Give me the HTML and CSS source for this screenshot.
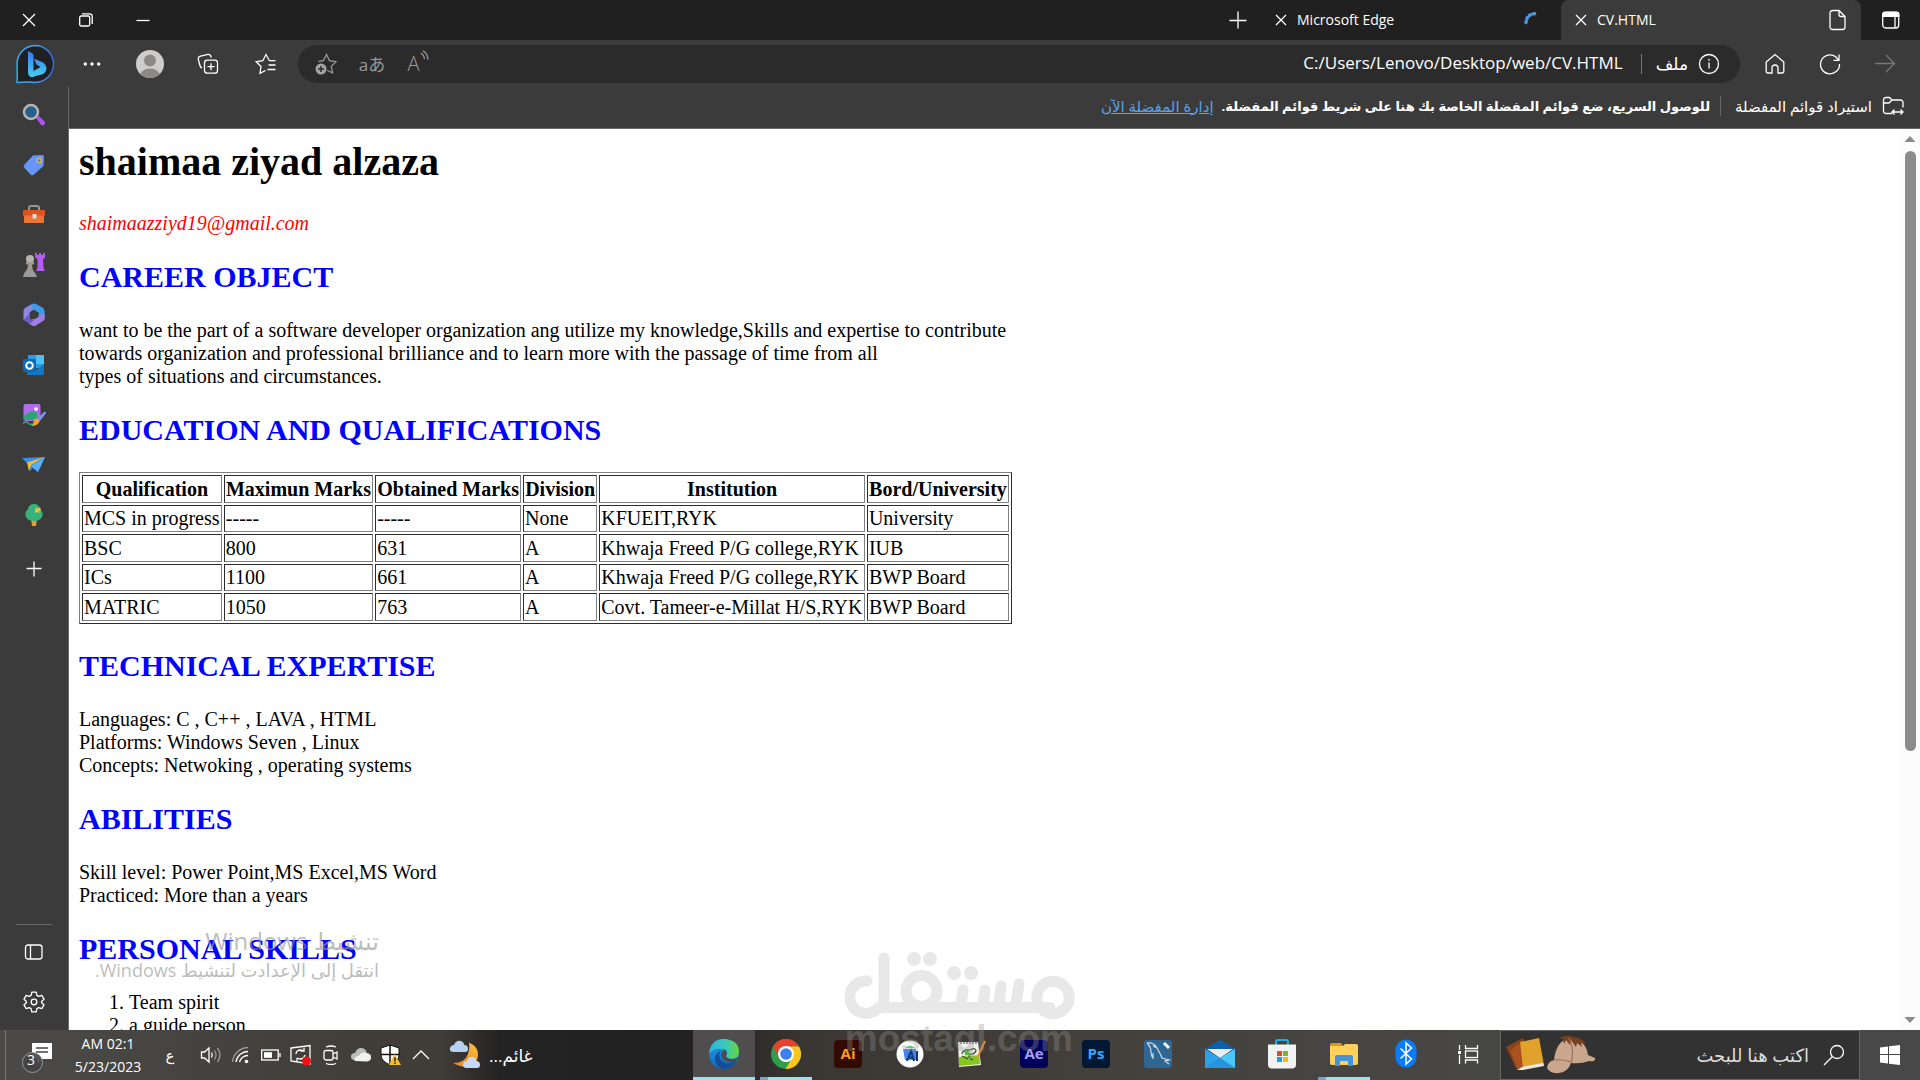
FILE: index.html
```html
<!DOCTYPE html>
<html lang="ar">
<head>
<meta charset="utf-8">
<title>CV.HTML</title>
<link rel="stylesheet" href="styles.css">
</head>
<body>
<header class="titlebar">
  <div class="window-controls">
    <button class="win-btn" aria-label="Close"><svg width="14" height="14" viewBox="0 0 14 14"><path d="M1 1l12 12M13 1L1 13" class="line"/></svg></button>
    <button class="win-btn" aria-label="Restore"><svg width="14" height="14" viewBox="0 0 14 14"><rect x=".7" y="3" width="10" height="10" rx="1.5" class="line"/><path d="M3 .8h7.5a2.6 2.6 0 0 1 2.7 2.7V11" class="line"/></svg></button>
    <button class="win-btn" aria-label="Minimize"><svg width="14" height="14" viewBox="0 0 14 14"><path d="M.5 7.5h13" class="line"/></svg></button>
  </div>
  <button class="new-tab" aria-label="New tab"><svg width="18" height="18" viewBox="0 0 18 18"><path d="M9 .5v17M.5 9.500h17" class="line"/></svg></button>
  <div class="tab">
    <button class="tab-close" aria-label="Close tab"><svg width="12" height="12" viewBox="0 0 12 12"><path d="M1 1l10 10M11 1L1 11" class="line"/></svg></button>
    <span class="tab-title">Microsoft Edge</span>
    <svg class="tab-icon" width="18" height="18" viewBox="0 0 18 18"><path d="M3 11.500C3.300 6 7 2.500 13.500 2.600" fill="none" stroke="#4a97dc" stroke-width="3.500" stroke-linecap="round" stroke-dasharray="1 3.200"/><path d="M3 11C3.500 6 7 2.600 13 2.700" fill="none" stroke="#4a97dc" stroke-width="2"/></svg>
  </div>
  <div class="tab active">
    <button class="tab-close" aria-label="Close tab"><svg width="12" height="12" viewBox="0 0 12 12"><path d="M1 1l10 10M11 1L1 11" class="line"/></svg></button>
    <span class="tab-title">CV.HTML</span>
    <svg class="tab-icon" width="18" height="22" viewBox="0 0 18 22"><path d="M3.500 1.500h6.500l6 6v10.500a2.500 2.500 0 0 1-2.500 2.500h-10A2.500 2.500 0 0 1 1 18V4a2.500 2.500 0 0 1 2.500-2.500zM10 1.500v4a2 2 0 0 0 2 2h4" class="line"/></svg>
  </div>
  <button class="tab-menu" aria-label="Tab actions"><svg width="20" height="20" viewBox="0 0 20 20"><rect x="1.700" y="2.500" width="16" height="15.500" rx="3" class="line"/><path d="M1 7V4.500A3 3 0 0 1 4 1.500h11.500a3 3 0 0 1 3 3V7z" fill="#fff"/><path d="M14 7v10.500" class="line"/></svg></button>
</header>

<nav class="toolbar" aria-label="Navigation">
  <button class="bing" aria-label="Bing">
    <svg width="40" height="40" viewBox="0 0 40 40"><defs><linearGradient id="ring" x1="0" x2="1"><stop offset="0" stop-color="#2bb0ea"/><stop offset=".5" stop-color="#4aa0f5"/><stop offset="1" stop-color="#2f6fe0"/></linearGradient><linearGradient id="bb" x1="0" y1="0" x2="0" y2="1"><stop offset="0" stop-color="#3a78f0"/><stop offset="1" stop-color="#45cdf0"/></linearGradient></defs><path d="M20 1.500A18.500 18.500 0 1 1 20 38.500Q14 37.500 2 38.500Q2.500 33 2 20A18.500 18.500 0 0 1 20 1.500z" fill="#1e2024" stroke="url(#ring)" stroke-width="1.500"/><path d="M13 7l4 2q1.500 1 1.500 2.500V27l7-4-4-2.500-2.500-6 9 4q4 2.500 3.200 7.500-.5 2.500-3 4L19 32.500q-2 1-4 0-2-1.500-2-4z" fill="url(#bb)"/></svg>
  </button>
  <div class="tools">
    <button class="tool" aria-label="Settings and more"><svg width="20" height="20" viewBox="0 0 20 20" fill="#fff"><circle cx="3.300" cy="10" r="1.700"/><circle cx="10" cy="10" r="1.700"/><circle cx="16.700" cy="10" r="1.700"/></svg></button>
    <button class="tool" aria-label="Profile"><svg width="28" height="28" viewBox="0 0 28 28"><clipPath id="av"><circle cx="14" cy="14" r="14"/></clipPath><g clip-path="url(#av)"><rect width="28" height="28" fill="#cfcdcc"/><circle cx="14" cy="10.500" r="6" fill="#8b8988"/><ellipse cx="14" cy="27" rx="10.500" ry="8.500" fill="#8b8988"/></g></svg></button>
    <button class="tool" aria-label="Collections"><svg width="22" height="22" viewBox="0 0 22 22"><rect x="7.500" y="7.200" width="13" height="13" rx="2.800" class="line"/><path d="M14 10.200v7M10.500 13.700h7" class="line"/><path d="M5 15Q3.300 14.500 2.500 11L1.300 6.200Q1 3.800 3.500 3.200L11 1.400Q13.500 1 14.300 4.500" class="line"/></svg></button>
    <button class="tool" aria-label="Favorites"><svg width="22" height="22" viewBox="0 0 22 22"><path d="M20.500 7.700h-6L11 1.500 7.800 7.700 1.200 8.800l4.800 4.700L5 20.300l5.500-2.800M13.500 12h7M12.500 16.500h8" class="line"/></svg></button>
  </div>
  <div class="address">
    <button class="mini" aria-label="Add to favorites"><svg width="22" height="22" viewBox="0 0 22 22"><path d="M3.500 8.500L8.300 7.700 11.500 1.500 14.500 7.700l6.500 1-4.700 4.700 1.200 6.500-5.200-2.400" class="line dim"/><circle cx="6" cy="16" r="5.500" fill="#a2a2a2"/><path d="M6 13v6M3 16h6" stroke="#2b2b2b" stroke-width="1.500"/></svg></button>
    <button class="mini translate" aria-label="Translate">aあ</button>
    <button class="mini read" aria-label="Read aloud">A<svg width="9" height="16" viewBox="0 0 9 16"><path d="M1 3q3 2 3.500 6M3 .7q4.500 2.500 5 9" class="line dim"/></svg></button>
    <input class="url" aria-label="Address" value="C:/Users/Lenovo/Desktop/web/CV.HTML">
    <button class="site-info"><span>ملف</span><svg width="22" height="22" viewBox="0 0 22 22"><circle cx="11" cy="11" r="9.500" class="line"/><path d="M11 9.500v6M11 6v1.800" class="line"/></svg></button>
  </div>
  <div class="nav-tools">
    <button class="tool" aria-label="Home"><svg width="20" height="22" viewBox="0 0 20 22"><path d="M1.200 9L10 1.500 18.800 9v9.500a1.500 1.500 0 0 1-1.500 1.500H13v-5a3 3 0 0 0-6 0v5H2.700a1.500 1.500 0 0 1-1.500-1.500z" class="line"/></svg></button>
    <button class="tool" aria-label="Refresh"><svg width="22" height="22" viewBox="0 0 22 22"><path d="M20.500 11A9.500 9.500 0 1 1 17 4l2.500 3M20 1.500v5.800h-5.500" class="line"/></svg></button>
    <button class="tool" aria-label="Forward"><svg width="22" height="22" viewBox="0 0 22 22"><path d="M1 10.500h19.500M12 2l8.500 8.500L12 19" fill="none" stroke="#777" stroke-width="1.300"/></svg></button>
  </div>
</nav>

<div class="workspace">
  <aside class="sidebar" aria-label="Sidebar">
    <button class="side" aria-label="Search"><svg width="24" height="24" viewBox="0 0 24 24"><path d="M14 15l3-2 6 6q0 4-3.500 3.500z" fill="#ab55f0"/><circle cx="9" cy="9" r="7" fill="#24618f" stroke="#b9b4ae" stroke-width="2.500"/></svg></button>
    <button class="side" aria-label="Shopping"><svg width="24" height="24" viewBox="0 0 24 24"><path d="M11 2.500L20 2q2 0 2 2l-.5 9L12 21.500q-2 1.500-3.500 0L2.500 15q-1.500-1.500 0-3.500z" fill="#6796fb"/><circle cx="17.300" cy="7.500" r="2" fill="#4472d0" stroke="#e5b53c" stroke-width="1.500"/></svg></button>
    <button class="side" aria-label="Tools"><svg width="24" height="24" viewBox="0 0 24 24"><path d="M7 8V5q0-2 2-2h6q2 0 2 2v3" fill="none" stroke="#98948e" stroke-width="2"/><rect x="1" y="7" width="22" height="6" rx="1" fill="#dd5220"/><rect x="2" y="12.500" width="20" height="7.500" rx="1" fill="#ec7436"/><rect x="10.500" y="11" width="4" height="4.500" fill="#ddd"/></svg></button>
    <button class="side" aria-label="Games"><svg width="24" height="24" viewBox="0 0 24 24"><path d="M13 0h2v2h2V0h2v2h2V0h2v5l-2 1 .5 9 1.500 3h-9l1.500-3V6l-2-1z" fill="#b45df2"/><circle cx="8" cy="6" r="4" fill="#b5b2b0"/><path d="M4 9h8v2l-2 1q0 5 3.500 8.500L15 24H1l1-3.500Q6 16 6 12l-2-1z" fill="#9d9996"/></svg></button>
    <button class="side" aria-label="Microsoft 365"><svg width="24" height="24" viewBox="0 0 24 24"><path d="M10 1L3.500 4.500Q1.500 6 1.500 8v8.500l6 3.500V9.500l5-3.500V1z" fill="#8e86e4"/><path d="M10 1q2-1 4 0l6.500 3.500q2 1.500 2 3.500v8L16.500 13V9.500L10.500 6z" fill="#3b9be8"/><path d="M22.500 10v7L14 22.500q-2 1-4 0L6 20l6-5 4.500-2z" fill="#a27de4"/><path d="M7.500 11v4.500L12 17.500 7.500 21l-6-4.500z" fill="#685fc6"/><path d="M12 7.500l4.500 2.500v4L12 16.500 8.500 14v-4z" fill="#3b3b3b"/></svg></button>
    <button class="side" aria-label="Outlook"><svg width="24" height="24" viewBox="0 0 24 24"><rect x="6" y="2" width="16" height="13" rx="1" fill="#2d9be0"/><path d="M14 2h8v9h-8z" fill="#4bc0f2"/><path d="M5 11l9 6 8-6v9q0 2-2 2H5z" fill="#1378c8"/><rect x="1" y="6" width="13" height="13" rx="1" fill="#0c6abc"/><circle cx="7.500" cy="12.500" r="3.300" fill="none" stroke="#fff" stroke-width="2"/></svg></button>
    <button class="side" aria-label="Image creator"><svg width="24" height="24" viewBox="0 0 24 24"><rect x="1.500" y="1" width="17" height="17" rx="2" fill="#b16bef"/><path d="M1.500 14Q9 5 15 10v7H2z" fill="#28a870"/><circle cx="14" cy="6" r="1.800" fill="#fff"/><path d="M1 20q4-2 5 0t5 1" fill="none" stroke="#35b37a" stroke-width="1.500"/><path d="M14 17l8-8q3-1 1.500 2L17 19z" fill="#7e92f0"/><path d="M14 15l3.500 3q-1 5-9 5 3-1 3-4 .5-3 2.500-4z" fill="#f4a42b"/></svg></button>
    <button class="side" aria-label="Drop"><svg width="24" height="24" viewBox="0 0 24 24"><path d="M0 5l23-1-7 15-5-4-4 3-1-7z" fill="#3590e8"/><path d="M22 4L5 9.500 7 18l2-6z" fill="#f5b833"/><path d="M23 4L9 13l7 6z" fill="#57aef5"/></svg></button>
    <button class="side" aria-label="E-tree"><svg width="24" height="24" viewBox="0 0 24 24"><path d="M9 15h6l-1 8h-4z" fill="#e8983c"/><path d="M12 1q5 0 6 5 4 4 2 8-2 4-8 4t-8-4q-2-4 2-8 1-5 6-5z" fill="#36b37b"/><path d="M14 4l2 2 2-2 1 3-2 1 1 2-3-1-2 1 0-3z" fill="#f2c037"/></svg></button>
    <button class="side add" aria-label="Add"><svg width="16" height="16" viewBox="0 0 16 16"><path d="M8 .5v15M.5 7.500h15" class="line"/></svg></button>
    <div class="side-bottom">
      <button class="side" aria-label="Hide sidebar"><svg width="20" height="18" viewBox="0 0 20 18"><rect x="1.500" y="2" width="16.500" height="14" rx="2.500" class="line"/><path d="M6.500 2v14" class="line"/></svg></button>
      <button class="side" aria-label="Settings"><svg width="24" height="24" viewBox="0 0 24 24"><path d="M9.800 2.200h4.400l.7 3.200 1.800 1 3.100-1L22 9.200l-2.400 2.200v1.300l2.400 2.100-2.200 3.800-3.100-1-1.800 1-.7 3.200H9.800l-.7-3.200-1.800-1-3.100 1L2 14.800l2.400-2.100v-1.300L2 9.200l2.200-3.800 3.100 1 1.800-1z" class="line" stroke-linejoin="round"/><circle cx="12" cy="12" r="2.800" class="line"/></svg></button>
    </div>
  </aside>

  <div class="browser">
    <div class="favbar" dir="rtl">
      <button class="import"><svg width="22" height="20" viewBox="0 0 22 20"><path d="M10 17.500H4A2.500 2.500 0 0 1 1.500 15V4A2.500 2.500 0 0 1 4 1.500h3.500L10 4h8.500A2.500 2.500 0 0 1 21 6.500v5M1.500 7H7l3-3M10 16h11M12.500 13.500L10 16l2.500 2.500M18.500 13.500L21 16l-2.500 2.500" class="line"/></svg><span>استيراد قوائم المفضلة</span></button>
      <p class="fav-note">للوصول السريع، ضع قوائم المفضلة الخاصة بك هنا على شريط قوائم المفضلة.</p>
      <a class="fav-link" href="#favorites">إدارة المفضلة الآن</a>
    </div>
    <div class="viewport">
      <main class="cv" lang="en">
        <h1>shaimaa ziyad alzaza</h1>
        <p class="email">shaimaazziyd19@gmail.com</p>
        <h2>CAREER OBJECT</h2>
        <p>want to be the part of a software developer organization ang utilize my knowledge,Skills and expertise to contribute<br>towards organization and professional brilliance and to learn more with the passage of time from all<br>types of situations and circumstances.</p>
        <h2>EDUCATION AND QUALIFICATIONS</h2>
        <table class="marks">
          <tr><th>Qualification</th><th>Maximun Marks</th><th>Obtained Marks</th><th>Division</th><th>Institution</th><th>Bord/University</th></tr>
          <tr><td>MCS in progress</td><td>-----</td><td>-----</td><td>None</td><td>KFUEIT,RYK</td><td>University</td></tr>
          <tr><td>BSC</td><td>800</td><td>631</td><td>A</td><td>Khwaja Freed P/G college,RYK</td><td>IUB</td></tr>
          <tr><td>ICs</td><td>1100</td><td>661</td><td>A</td><td>Khwaja Freed P/G college,RYK</td><td>BWP Board</td></tr>
          <tr><td>MATRIC</td><td>1050</td><td>763</td><td>A</td><td>Covt. Tameer-e-Millat H/S,RYK</td><td>BWP Board</td></tr>
        </table>
        <h2>TECHNICAL EXPERTISE</h2>
        <p>Languages: C , C++ , LAVA , HTML<br>Platforms: Windows Seven , Linux<br>Concepts: Netwoking , operating systems</p>
        <h2>ABILITIES</h2>
        <p>Skill level: Power Point,MS Excel,MS Word<br>Practiced: More than a years</p>
        <h2>PERSONAL SKILLS</h2>
        <ol>
          <li>Team spirit</li>
          <li>a guide person</li>
        </ol>
      </main>
      <div class="scrollbar">
        <svg width="12" height="6" viewBox="0 0 12 6"><path d="M6 0l5.500 6H.5z" fill="#8b8b8b"/></svg>
        <div class="track"><div class="thumb"></div></div>
        <svg width="12" height="6" viewBox="0 0 12 6"><path d="M6 6l5.500-6H.5z" fill="#8b8b8b"/></svg>
      </div>
    </div>
  </div>
</div>

<footer class="taskbar">
  <div class="tray">
    <button class="notify" aria-label="Notifications"><svg width="34" height="34" viewBox="0 0 34 34"><path d="M12 2h20v16H22l-5 5v-5h-5z" fill="#fff"/><path d="M16 7h12M16 11h12" stroke="#444" stroke-width="1.500"/><circle cx="12.500" cy="21.500" r="10" fill="#444" fill-opacity=".9" stroke="#999"/></svg><span class="count">3</span></button>
    <div class="clock"><span>AM 02:1</span><span>5/23/2023</span></div>
    <button class="lang">ع</button>
    <button class="tray-btn" aria-label="Volume"><svg width="22" height="20" viewBox="0 0 22 20"><path d="M1.500 7h3L9 3v14l-4.500-4h-3z" class="line"/><path d="M11.500 7.500q1.500 2.500 0 5" class="line"/><path d="M14.500 5.500q3 4.500 0 9M17.500 3q5 7 0 14" class="line dim"/></svg></button>
    <button class="tray-btn" aria-label="Network"><svg width="20" height="20" viewBox="0 0 20 20"><g class="line"><path d="M1.500 17A16 16 0 0 1 17 2.500" stroke="#999"/><path d="M5 17A12 12 0 0 1 17 6.500M8.500 17A8.500 8.500 0 0 1 17 10.500"/></g><circle cx="15.500" cy="16.500" r="1.800" fill="#fff"/></svg></button>
    <button class="tray-btn" aria-label="Battery"><svg width="20" height="12" viewBox="0 0 20 12"><rect x=".7" y="1" width="16.500" height="10" class="line"/><path d="M19 4v4" class="line"/><rect x="3" y="3.200" width="8" height="5.600" fill="#fff"/></svg></button>
    <button class="tray-btn" aria-label="Update"><svg width="22" height="22" viewBox="0 0 22 22"><path d="M1 4l19-2.500V20L1 17z" class="line"/><path d="M6 10q0-4 5-4l3 1M14 3.500V7h-3.500M15 11q-1 4-5 4l-3-1M7 17.500V14" class="line"/><circle cx="16.500" cy="17" r="4.500" fill="#f01212"/></svg></button>
    <button class="tray-btn" aria-label="Meet now"><svg width="18" height="20" viewBox="0 0 18 20"><rect x="2" y="5.500" width="9" height="9.500" rx="2" class="line"/><path d="M11 9l4-2v7l-4-2M4 2q5-2 10 0M4 18.500q5 2 10 0" class="line"/></svg></button>
    <button class="tray-btn" aria-label="OneDrive"><svg width="22" height="16" viewBox="0 0 22 16"><path d="M5 13.500q-4.500-1-4-4.500.5-3 4-3Q7 1 11 1q4.500 0 6 5 4 .5 4 4 0 3.500-4 4z" fill="#bdbcbb"/><path d="M5 14q-2-4 4-5.500 3-5 8-2 4 .5 4 4 0 3.500-4 4z" fill="#f1f1f1"/></svg></button>
    <button class="tray-btn" aria-label="Security"><svg width="22" height="22" viewBox="0 0 22 22"><path d="M10 1l9 3v7q0 6-9 10Q1 17 1 11V4z" fill="#fff" stroke="#111"/><path d="M10 1v19M1 10.500h18" stroke="#111" stroke-width="1.500"/><path d="M14.500 10L21 21H9z" fill="#f7bc2b"/><path d="M15 13.500v4M15 18.500v1.500" stroke="#222" stroke-width="1.500"/></svg></button>
    <button class="tray-btn" aria-label="Hidden icons"><svg width="18" height="10" viewBox="0 0 18 10"><path d="M1 9l8-8 8 8" class="line" stroke-width="2"/></svg></button>
  </div>
  <button class="weather"><svg width="32" height="30" viewBox="0 0 32 30"><defs><linearGradient id="moon" x1="0" y1="1" x2="1" y2="0"><stop offset="0" stop-color="#ef7b28"/><stop offset="1" stop-color="#fbc33c"/></linearGradient></defs><path d="M20 2.500Q32 8 28 20 21 32 4 23q12 0 15-9 2-6 1-11.500z" fill="url(#moon)"/><path d="M5 12q-5 0-4-4 1-3 4-3 2-5 7-4 3 1 3 4 4 0 4 4 0 3-3 3z" fill="#b5d0f0"/><path d="M17 28q-4-1-3-4 1-3 4-3 2-5 6-4t3 4q4 0 4 4 0 3-3 3z" fill="#c4d9f5"/></svg><span dir="rtl">غائم...</span></button>
  <div class="apps">
    <button class="app current" aria-label="Edge"><svg width="32" height="32" viewBox="0 0 32 32"><defs><linearGradient id="e1" x1="0" x2="1"><stop offset="0" stop-color="#2cb4e0"/><stop offset=".55" stop-color="#3cc8b8"/><stop offset="1" stop-color="#66d63c"/></linearGradient><linearGradient id="e2" x1="0" y1="0" x2="0" y2="1"><stop offset="0" stop-color="#1ea0dc"/><stop offset="1" stop-color="#1468c8"/></linearGradient></defs><circle cx="16" cy="16" r="15" fill="url(#e2)"/><path d="M1.500 13Q4 1 16 1q15 1 15 13 0 7-8 7-5 0-5-3 2-2 1-5-2-3-6-2Q7 10 1.500 15z" fill="url(#e1)"/><path d="M13 13q-4 5 1 10 7 5 15-1-4 8-12 9-9-1-10-9 0-7 6-9z" fill="#124f98"/><path d="M18 18q1 3 6 3 4 0 7-2-2 5-7 5-9 0-11-6 0-5 4-6 3 2 1 6z" fill="#4c4a4b"/></svg></button>
    <button class="app running" aria-label="Chrome"><svg width="32" height="32" viewBox="0 0 32 32"><circle cx="16" cy="16" r="15" fill="#2f9e4a"/><path d="M3 8.500A15 15 0 0 1 29 8.500H16L9.500 20z" fill="#e8412f"/><path d="M29 8.500A15 15 0 0 1 15.500 31l7-11.500L16 8.500z" fill="#fbc51e"/><circle cx="16" cy="16" r="8" fill="#fff"/><circle cx="16" cy="16" r="5.800" fill="#3a80f0"/></svg></button>
    <button class="app"><span class="adobe ai">Ai</span></button>
    <button class="app" aria-label="Android Studio"><svg width="28" height="28" viewBox="0 0 28 28"><circle cx="14" cy="14" r="13.500" fill="#fff"/><path d="M7 9h13v11H9z" fill="#4285f0"/><path d="M9 8q5-5 10 0z" fill="#3ddc84"/><path d="M11 21l4-10 3 10M12.500 17.500h5M21 11v10" fill="none" stroke="#153a66" stroke-width="2"/></svg></button>
    <button class="app" aria-label="Notepad++"><svg width="30" height="30" viewBox="0 0 30 30"><path d="M1 3h20l3 23-22 2z" fill="#f0f0ee"/><path d="M2 18l20-2 1 9-21 2z" fill="#87c61f"/><path d="M3 4h17" stroke="#999" stroke-width="2" stroke-dasharray="2 1"/><path d="M5 15q1-5 8-4 6-3 6 1-2 4-6 3-3 4 3 6M5 17l6 3" fill="none" stroke="#33491f" stroke-width="1.200"/><circle cx="10" cy="14" r="2.500" fill="#53bb3a"/><path d="M28 2l-6 13-1 4" stroke="#ee8e22" stroke-width="2" fill="none"/></svg></button>
    <button class="app"><span class="adobe ae">Ae</span></button>
    <button class="app"><span class="adobe ps">Ps</span></button>
    <button class="app" aria-label="MySQL Workbench"><svg width="28" height="28" viewBox="0 0 28 28"><rect width="28" height="28" rx="3" fill="#2f6792"/><path d="M3 3q7-1 10 5 4 7 5 10l7 2-4 1 4 3M3 3q4 4 4 9 0 4 2 6l0-5M13 8q-3-2-4-2" fill="none" stroke="#c3d8e8" stroke-width="1.300"/><path d="M20 3l5 5" stroke="#fff" stroke-width="3"/></svg></button>
    <button class="app" aria-label="Mail"><svg width="30" height="28" viewBox="0 0 30 28"><path d="M0 9L15 0l15 9z" fill="#0b5fae"/><path d="M2 9h26L15 18z" fill="#ededed"/><path d="M0 9l15 9 15-9v19H0z" fill="#2aa2ea"/><path d="M30 9v19L15 18z" fill="#49c7f7"/><path d="M0 28l15-10 15 10z" fill="#2594dc"/></svg></button>
    <button class="app" aria-label="Store"><svg width="30" height="30" viewBox="0 0 30 30"><path d="M9 7V3q0-2 2-2h8q2 0 2 2v4" fill="none" stroke="#2ba7e4" stroke-width="2"/><path d="M1 5.500h28v20q0 4-4 4H5q-4 0-4-4z" fill="#f2f2f2"/><path d="M10 12h5v5h-5z" fill="#e3492b"/><path d="M16 12h5v5h-5z" fill="#78b928"/><path d="M10 18h5v5h-5z" fill="#1e9ce6"/><path d="M16 18h5v5h-5z" fill="#f9b912"/></svg></button>
    <button class="app running" aria-label="File Explorer"><svg width="28" height="26" viewBox="0 0 28 26"><path d="M0 4q0-2 2-2h9l2 3H0z" fill="#d99a18"/><path d="M0 5h13l2-2h11q2 0 2 2v17q0 2-2 2H2q-2 0-2-2z" fill="#fdd15b"/><path d="M5 25V16q0-2 2-2h14q2 0 2 2v9h-5v-4q0-1-1-1h-6q-1 0-1 1v4z" fill="#4592d6"/></svg></button>
    <button class="app" aria-label="Bluetooth"><svg width="22" height="30" viewBox="0 0 22 30"><rect x=".5" y=".5" width="21" height="28" rx="10.500" fill="#0a7bfa"/><path d="M5.500 9.500l11 10.500-5.500 5V4l5.500 5-11 10.500" fill="none" stroke="#fff" stroke-width="1.500"/></svg></button>
    <button class="app" aria-label="Task view"><svg width="22" height="22" viewBox="0 0 22 22"><path d="M2.500 2v5M2.500 12v9M8.500 2v3.500h12V2M8.500 20.500V17h12v3.500" class="line"/><rect x="8.500" y="8" width="12" height="6.500" class="line"/><rect x="1" y="8" width="3" height="3" fill="#fff"/></svg></button>
  </div>
  <div class="search">
    <svg width="90" height="40" viewBox="0 0 90 40"><path d="M1 12L18 3l8 25-14 7z" fill="#8c4218"/><path d="M12 33L5 16l9-8 12 24z" fill="#a9521f"/><path d="M15 7l19-4 5 27-21 3z" fill="#e1a22b"/><path d="M12 35l5-3 21-4 1 3-21 4z" fill="#efe9e4"/><path d="M42 33q1-7 7-8 2-18 14-22 18 1 20 17l7 3q1 4-6 3-8 3-18 2-3 9-12 10-9 1-12-5z" fill="#c9a68c"/><path d="M54 3q9-4 15-1 9 1 12 8l-5-2 1 4-5-4-1 4-5-7-1 5-4-5-2 4-1-5z" fill="#74401f"/><path d="M64 3q6 12 2 25M49 25q8-1 17 2" fill="none" stroke="#9a7460" stroke-width="1.200"/></svg>
    <input class="search-input" dir="rtl" aria-label="بحث" placeholder="اكتب هنا للبحث">
    <svg width="22" height="22" viewBox="0 0 22 22"><circle cx="14" cy="8" r="6.500" class="line"/><path d="M9.500 12.500L1 21" class="line"/></svg>
  </div>
  <button class="start" aria-label="Start"><svg width="20" height="20" viewBox="0 0 20 20" fill="#fff"><path d="M0 2.500L8 1.500V9H0zM9 1.300L20 0v9H9zM0 10h8v8.500L0 17.500zM9 10h11v10L9 18.700z"/></svg></button>
</footer>

<div class="activation" dir="rtl">
  <div class="activation-title">تنشيط Windows</div>
  <div class="activation-text">انتقل إلى الإعدادت لتنشيط Windows.</div>
</div>
<div class="watermark">
  <svg width="230" height="68" viewBox="0 0 230 68" role="img" aria-label="mostaql"><g fill="none" stroke="#e6e6e6" stroke-width="11" stroke-linecap="round"><path d="M22 29A16.200 16.200 0 1 0 33 56"/><path d="M39 6v40q0 9-8 12M35 55.500h170"/><circle cx="76.500" cy="39" r="15.500"/><circle cx="208" cy="45.500" r="16.200"/><path d="M116 52l2-14M138 52l2-14M154 52l2-18M171 52l3-20"/></g><g fill="#e6e6e6"><circle cx="69" cy="7" r="7"/><circle cx="85" cy="7" r="7"/><circle cx="109" cy="21" r="7"/><circle cx="126" cy="21" r="7"/></g></svg>
  <div class="watermark-url">mostaql.com</div>
</div>
</body>
</html>
```
FILE: styles.css
```css
* { box-sizing: border-box; }

body {
  margin: 0;
  height: 100vh;
  display: flex;
  flex-direction: column;
  overflow: hidden;
  position: relative;
  background: #3b3b3b;
  color: #fff;
  font-family: "Open Sans", "DejaVu Sans", sans-serif;
  font-size: 14px;
}

button {
  display: flex;
  align-items: center;
  justify-content: center;
  padding: 0;
  border: 0;
  background: none;
  color: inherit;
  font: inherit;
  flex: none;
}

input {
  border: 0;
  background: none;
  color: inherit;
  font: inherit;
  outline: 0;
  min-width: 0;
}

svg { display: block; flex: none; }
.line { fill: none; stroke: #fff; stroke-width: 1.3; }
.dim { stroke: #999; }

/* Title bar and tabs */
.titlebar { display: flex; height: 40px; flex: none; background: #202020; }
.window-controls { display: flex; flex: 1; }
.win-btn { width: 57px; }
.new-tab { width: 46px; }
.tab { display: flex; align-items: center; width: 300px; padding: 0 14px 0 12px; }
.tab:not(.active) { padding-right: 20px; }
.tab.active { background: #3b3b3b; border-radius: 8px 8px 0 0; }
.tab-close { width: 16px; height: 16px; margin-right: 8px; }
.tab-title { flex: 1; padding-bottom: 2px; }
.tab-menu { width: 59px; }

/* Toolbar */
.toolbar { display: flex; align-items: center; height: 47px; flex: none; }
.bing { width: 69px; }
.tools { display: flex; gap: 12px; }
.tool { width: 46px; height: 40px; }
.nav-tools { display: flex; gap: 9px; padding: 0 12px; }
.address {
  display: flex;
  align-items: center;
  flex: 1;
  height: 38px;
  margin-left: 9px;
  padding: 0 20px 0 5px;
  border-radius: 19px;
  background: #2b2b2b;
}
.mini { width: 46px; color: #999; font-size: 18px; }
.translate { font-family: "Open Sans", "Noto Sans CJK JP", sans-serif; font-size: 17px; }
.read { align-items: flex-start; font-size: 20px; line-height: 28px; font-weight: 300; }
.url { flex: 1; text-align: right; font-size: 17px; padding: 0 18px 2px 0; }
.site-info { gap: 10px; padding-left: 14px; border-left: 1px solid #777; height: 20px; font-size: 17px; }

/* Sidebar */
.workspace { display: flex; flex: 1; min-height: 0; }
.sidebar { display: flex; flex-direction: column; align-items: center; width: 69px; flex: none; padding: 3px 0 3px; border-right: 1px solid #6a6a6a; }
.side { width: 36px; height: 50px; }
.add { margin-top: 4px; }
.side-bottom { margin-top: auto; padding-top: 2px; border-top: 1px solid #6a6a6a; }

/* Favorites bar */
.browser { display: flex; flex-direction: column; flex: 1; min-width: 0; }
.favbar { display: flex; align-items: center; height: 42px; flex: none; padding: 0 16px 4px; border-bottom: 1px solid #6a6a6a; font-size: 15px; }
.import { gap: 10px; height: 20px; padding-left: 14px; border-left: 1px solid #666; }
.fav-note { margin: 0 10px 0 8px; font-weight: bold; font-size: 13px; }
.fav-link { color: #5aa2e6; }

/* Page */
.viewport { display: flex; flex: 1; min-height: 0; background: #fff; }
.cv { flex: 1; min-width: 0; overflow: hidden; padding: 10px; color: #000; font: 20px/23px "Liberation Serif", serif; }
.cv h1 { margin: 0 0 27px; font-size: 40px; line-height: 46px; }
.cv h2 { margin: 25px 0; font-size: 30px; line-height: 34px; color: #00f; }
.cv p { margin: 0; }
.cv .email { color: #f00; font-style: italic; }
.cv ol { margin: 0; padding-left: 50px; }
.marks { min-width: 933px; border: 1px solid; border-color: #808080 #2c2c2c #2c2c2c #808080; border-spacing: 2px; }
.marks th, .marks td { padding: 1px; border: 1px solid; border-color: #2c2c2c #808080 #808080 #2c2c2c; }
.marks tr:nth-child(odd) > * { padding-top: 2px; }

.scrollbar { display: flex; flex-direction: column; align-items: center; width: 20px; padding: 7px 0; gap: 9px; background: #fcfcfc; }
.track { flex: 1; width: 11px; }
.thumb { height: 70%; border-radius: 6px; background: #8b8b8b; }

/* Taskbar */
.taskbar {
  display: flex;
  height: 50px;
  flex: none;
  background: linear-gradient(90deg, #4b4a48 0, #42403b 16%, #403c38 23%, #242323 26%, #232222 37%, #3a3632 42%, #45423d 60%, #484848 80%, #484848 100%);
}
.tray { display: flex; align-items: center; margin-left: 5px; border-left: 1px solid #777; }
.notify { position: relative; width: 66px; padding: 6px 4px 0 0; }
.count { position: absolute; left: 21px; top: 15px; font-size: 14px; line-height: 20px; }
.clock { display: flex; flex-direction: column; align-items: center; width: 72px; line-height: 23px; }
.lang { width: 52px; font-size: 15px; }
.tray-btn { width: 30px; height: 40px; }
.weather { gap: 8px; padding-left: 13px; font-size: 17px; }
.apps { display: flex; flex: 1; justify-content: flex-end; padding-right: 1px; }
.app { width: 62px; border-bottom: 3px solid transparent; }
.current { background: #4f4d4e; border-bottom-color: #8ee6f0; }
.running { width: 52px; margin: 0 5px; border-image: linear-gradient(90deg, #78a4c4 20%, #8ee6f0 20%) 3; }
.adobe { width: 28px; height: 28px; border-radius: 4px; font-weight: bold; font-size: 15px; line-height: 26px; text-align: center; }
.ai { background: #330a00; color: #ff9a1e; }
.ae { background: #00005b; color: #a6a0ff; }
.ps { background: #001834; color: #31a8ff; }
.search { display: flex; align-items: center; width: 360px; flex: none; padding: 0 14px 0 4px; border: 1px solid #666; background: #323232; }
.search-input { flex: 1; padding: 0 14px; font-size: 18px; }
.search-input::placeholder { color: #ddd; opacity: 1; }
.start { width: 60px; }

/* Overlays */
.activation { position: absolute; right: calc(100% - 379px); bottom: 97px; color: rgba(150, 150, 150, .65); white-space: nowrap; }
.activation-title { font-size: 24px; line-height: 32px; }
.activation-text { font-size: 18px; line-height: 26px; }
.watermark { position: absolute; left: 44%; bottom: 22px; opacity: .9; pointer-events: none; }
.watermark-url { height: 38px; font: bold 37px/38px "Liberation Sans", sans-serif; color: rgba(150, 150, 150, .4); }
```
